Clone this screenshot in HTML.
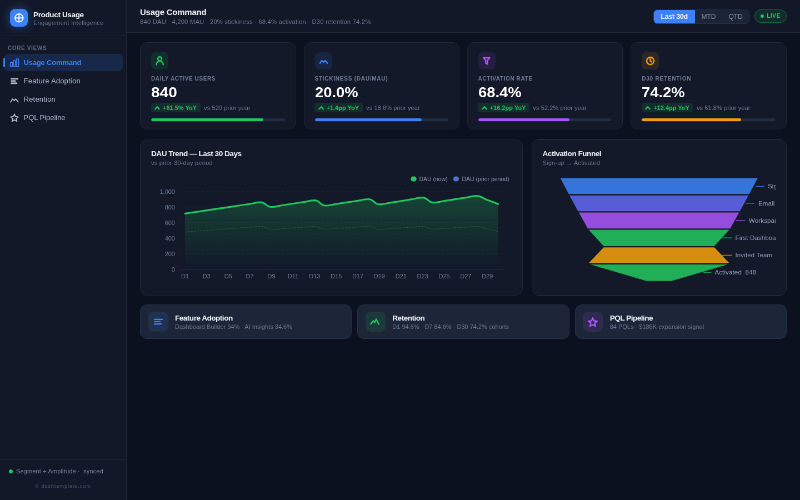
<!DOCTYPE html>
<html lang="en">
<head>
<meta charset="utf-8">
<title>Product Usage — Usage Command</title>
<style>
*{box-sizing:border-box;margin:0;padding:0}
html,body{width:800px;height:500px;overflow:hidden;background:#0c1120}
body{font-family:"Liberation Sans",sans-serif;color:#e2e8f0}
#app{position:absolute;left:0;top:0;width:1440px;height:900px;transform:scale(0.5555556);transform-origin:0 0;background:transparent;overflow:hidden;will-change:transform}
/* sidebar */
.sb{position:absolute;left:0;top:0;width:228px;height:900px;background:#121828;border-right:1px solid #1f2739}
.sbh{height:64.600px;border-bottom:1px solid #1f2739;padding:16px 18px;display:flex;align-items:center;gap:10px}
.logo{width:32px;height:32px;border-radius:9px;background:#3b82f6;box-shadow:0 0 18px rgba(59,130,246,.45);display:flex;align-items:center;justify-content:center;flex:none}
.brand b{display:block;position:relative;top:1.800px;font-size:13.5px;line-height:16px;font-weight:700;color:#f1f5f9;white-space:nowrap;letter-spacing:-.35px}
.brand span{display:block;position:relative;top:1.200px;font-size:11px;line-height:13px;color:#6c7990;white-space:nowrap;margin-top:1px;letter-spacing:.23px}
.navlab{font-size:10px;font-weight:700;letter-spacing:.63px;color:#5f6b84;padding:16px 14px 4.700px 14px;line-height:12px}
.nav{padding:0 5.700px 0 7px}
.ni{position:relative;height:31px;margin-bottom:2px;border-radius:8px;display:flex;align-items:center;padding:0 11px;gap:8.600px;font-size:13px;font-weight:400;color:#b2bdce;white-space:nowrap;letter-spacing:.2px}
.ni svg{flex:none}
.ni.on{background:#18284a;color:#3b82f6;font-weight:700;letter-spacing:-.19px}
.ni.on:before{content:"";position:absolute;left:-1px;top:7px;width:2.500px;height:17px;border-radius:2px;background:#3b82f6}
.sbf{position:absolute;left:0;right:0;bottom:0;height:73px;border-top:1px solid #1f2739;padding:14px 16px 0 16px}
.sync{display:flex;align-items:center;gap:6px;font-size:11px;letter-spacing:.15px;color:#7b879c;white-space:nowrap}
.sync i{width:7px;height:7px;border-radius:50%;background:#22c55e;display:block}
.copy{text-align:center;font-size:9.500px;letter-spacing:.75px;color:#4a556c;margin-top:14.700px}
/* topbar */
.tb{position:absolute;left:228px;top:0;right:0;height:59.200px;background:#121828;border-bottom:1px solid #1f2739}
.tb h1{position:absolute;left:24px;top:12.700px;font-size:15px;line-height:18px;font-weight:700;color:#f1f5f9;white-space:nowrap;letter-spacing:-.24px}
.tb p{position:absolute;left:24px;top:32px;font-size:11.300px;line-height:14px;color:#6c7990;white-space:nowrap;letter-spacing:.16px}
.seg{position:absolute;left:948px;top:16.500px;width:173px;height:26px;border-radius:7px;background:#1c2437;border:1px solid #283247;display:flex;overflow:hidden;font-size:12px;color:#8a96ab}
.seg span{display:flex;align-items:center;justify-content:center;height:100%}
.seg .a{width:74px;background:#3b82f6;color:#fff;font-weight:700}
.live{position:absolute;left:1130px;top:17.300px;width:58px;height:23.300px;border-radius:12px;border:1px solid rgba(34,197,94,.35);background:rgba(34,197,94,.12);color:#22c55e;font-size:10px;font-weight:700;letter-spacing:.6px;display:flex;align-items:center;justify-content:center;gap:5px}
.live i{width:6px;height:6px;border-radius:50%;background:#22c55e;display:block}
/* cards */
.card{position:absolute;background:#131929;border:1px solid #1e2638;border-radius:12px}
.kpi .ic{position:absolute;left:19px;top:17px;width:31px;height:31px;border-radius:8px;display:flex;align-items:center;justify-content:center}
.kpi .lb{position:absolute;left:19px;top:59px;font-size:10px;line-height:12px;font-weight:700;letter-spacing:.6px;color:#727e96;white-space:nowrap}
.kpi .val{position:absolute;left:19px;top:74.800px;font-size:25.500px;line-height:28px;font-weight:700;color:#fff;white-space:nowrap;transform:scaleX(1.1);transform-origin:0 0}
.kpi .row{position:absolute;left:18.500px;top:108.300px;height:17px;display:flex;align-items:center;gap:6.500px}
.kpi .bd{height:17px;border-radius:4px;background:rgba(34,197,94,.13);color:#22c55e;font-size:11px;font-weight:700;display:flex;align-items:center;padding:0 6.500px 0 5.500px;gap:4px;white-space:nowrap}
.kpi .vs{font-size:11px;line-height:16px;color:#727e96;white-space:nowrap;letter-spacing:.1px}
.kpi .bar{position:absolute;left:19px;right:19px;top:136px;height:5px;border-radius:3px;background:#232c40;overflow:hidden}
.kpi .bar i{display:block;height:100%;border-radius:3px}
.ct{position:absolute;left:19px;top:17.300px;font-size:13.600px;line-height:16px;font-weight:700;color:#f1f5f9;white-space:nowrap;letter-spacing:-.5px}
.cs{position:absolute;left:19px;top:34.700px;font-size:11px;line-height:13px;color:#6c7990;white-space:nowrap;letter-spacing:.2px}
.lnk{background:#1d2538;border-color:#283146}
.lnk .ic{position:absolute;left:13.500px;top:12px;width:36px;height:36px;border-radius:9px;display:flex;align-items:center;justify-content:center}
.lnk b{position:absolute;left:62px;top:16px;font-size:13.600px;line-height:16px;font-weight:700;color:#f1f5f9;white-space:nowrap;letter-spacing:-.52px}
.lnk span{position:absolute;left:62px;top:33px;font-size:11px;line-height:13px;color:#6f7b93;white-space:nowrap}
svg text{font-family:"Liberation Sans",sans-serif}
</style>
</head>
<body>
<div id="app">
<div class="sb">
 <div class="sbh">
  <div class="logo"><svg width="20.500" height="20.500" viewBox="0 0 24 24" fill="none" stroke="#fff" stroke-width="2.300" stroke-linecap="round"><circle cx="12" cy="12" r="8.5"/><path d="M12 3.5v17M3.5 12h17"/></svg></div>
  <div class="brand"><b>Product Usage</b><span>Engagement Intelligence</span></div>
 </div>
 <div class="navlab">CORE VIEWS</div>
 <div class="nav">
  <div class="ni on"><svg width="16" height="16" viewBox="0 0 24 24" style="overflow:visible" fill="none" stroke="currentColor" stroke-width="2.500" stroke-linejoin="round"><rect x="0.900" y="11" width="5.900" height="11.500" rx="1.200"/><rect x="9.050" y="6.300" width="5.900" height="16.200" rx="1.200"/><rect x="17.200" y="1.600" width="5.900" height="20.900" rx="1.200"/></svg><span>Usage Command</span></div>
  <div class="ni"><svg width="16" height="16" viewBox="0 0 24 24" style="overflow:visible" fill="currentColor"><rect x="2" y="3.600" width="20.300" height="4.100"/><rect x="2" y="9.650" width="13.500" height="4.100"/><rect x="2" y="15.700" width="17.600" height="4.100"/></svg><span>Feature Adoption</span></div>
  <div class="ni"><svg width="16" height="16" viewBox="0 0 24 24" style="overflow:visible" fill="none" stroke="currentColor" stroke-width="2.700" stroke-linecap="round" stroke-linejoin="round"><path d="M1.500 19l5.500-8.500 4.500 4.700 4-4.700 6.500 8.500"/></svg><span>Retention</span></div>
  <div class="ni"><svg width="16" height="16" viewBox="0 0 24 24" style="overflow:visible" fill="none" stroke="currentColor" stroke-width="2.700" stroke-linejoin="round"><path d="M12.00 2.00L14.88 8.84L22.27 9.46L16.66 14.31L18.35 21.54L12.00 17.70L5.65 21.54L7.34 14.31L1.73 9.46L9.12 8.84Z"/></svg><span style="letter-spacing:-.04px">PQL Pipeline</span></div>
 </div>
 <div class="sbf">
  <div class="sync"><i></i><span>Segment + Amplitude ·&nbsp; synced</span></div>
  <div class="copy">© dashtemplate.com</div>
 </div>
</div>
<div class="tb">
 <h1>Usage Command</h1>
 <p>840 DAU · 4,200 MAU · 20% stickiness · 68.4% activation · D30 retention 74.2%</p>
 <div class="seg"><span class="a">Last 30d</span><span style="width:50px">MTD</span><span style="width:48px">QTD</span></div>
 <div class="live"><i></i><span>LIVE</span></div>
</div>
<div class="card kpi" style="left:252px;top:76px;width:280.500px;height:157px">
 <div class="ic" style="background:rgba(34,197,94,.12)"><svg width="31" height="31" viewBox="0 0 31 31" fill="none" stroke="#22c55e" stroke-width="2.400" stroke-linecap="round" stroke-linejoin="round"><circle cx="15.500" cy="11.700" r="3.500"/><path d="M9.300 22.300a6.200 6.200 0 0 1 12.400 0"/></svg></div>
 <div class="lb">DAILY ACTIVE USERS</div>
 <div class="val">840</div>
 <div class="row"><div class="bd"><svg width="12" height="12" viewBox="0 0 24 24" fill="none" stroke="currentColor" stroke-width="4.600" stroke-linecap="round" stroke-linejoin="round"><path d="M4.5 16.5l7.5-8 7.5 8"/></svg><span>+61.5% YoY</span></div><div class="vs">vs 520 prior year</div></div>
 <div class="bar"><i style="width:84%;background:#22c55e"></i></div>
</div>
<div class="card kpi" style="left:546.5px;top:76px;width:280.500px;height:157px">
 <div class="ic" style="background:rgba(59,130,246,.12)"><svg width="31" height="31" viewBox="0 0 31 31" fill="none" stroke="#3b82f6" stroke-width="2.400" stroke-linecap="round" stroke-linejoin="round"><path d="M8.800 19.900L12.300 14.900L15.350 18.500L18.500 14.900L22.400 19.900"/></svg></div>
 <div class="lb" style="letter-spacing:.76px">STICKINESS (DAU/MAU)</div>
 <div class="val" style="transform:scaleX(1.075)">20.0%</div>
 <div class="row"><div class="bd"><svg width="12" height="12" viewBox="0 0 24 24" fill="none" stroke="currentColor" stroke-width="4.600" stroke-linecap="round" stroke-linejoin="round"><path d="M4.5 16.5l7.5-8 7.5 8"/></svg><span>+1.4pp YoY</span></div><div class="vs">vs 18.6% prior year</div></div>
 <div class="bar"><i style="width:80%;background:#3b82f6"></i></div>
</div>
<div class="card kpi" style="left:840.600px;top:76px;width:280.500px;height:157px">
 <div class="ic" style="background:rgba(168,85,247,.12)"><svg width="31" height="31" viewBox="0 0 31 31" fill="none" stroke="#a855f7" stroke-width="2.500" stroke-linecap="round" stroke-linejoin="round"><path d="M9.200 9.900H20.300L16.300 14.800V21.300L13.300 19.800V14.800Z"/></svg></div>
 <div class="lb">ACTIVATION RATE</div>
 <div class="val" style="transform:scaleX(1.075)">68.4%</div>
 <div class="row"><div class="bd"><svg width="12" height="12" viewBox="0 0 24 24" fill="none" stroke="currentColor" stroke-width="4.600" stroke-linecap="round" stroke-linejoin="round"><path d="M4.5 16.5l7.5-8 7.5 8"/></svg><span>+16.2pp YoY</span></div><div class="vs">vs 52.2% prior year</div></div>
 <div class="bar"><i style="width:68.4%;background:#a855f7"></i></div>
</div>
<div class="card kpi" style="left:1135.200px;top:76px;width:280.500px;height:157px">
 <div class="ic" style="background:rgba(245,158,11,.12)"><svg width="31" height="31" viewBox="0 0 31 31" fill="none" stroke="#f59e0b" stroke-width="2.400" stroke-linecap="round" stroke-linejoin="round"><circle cx="15.500" cy="15.500" r="6.500"/><path d="M15.500 11.600V15.700L18.200 17.400"/></svg></div>
 <div class="lb" style="letter-spacing:.78px">D30 RETENTION</div>
 <div class="val" style="transform:scaleX(1.075)">74.2%</div>
 <div class="row"><div class="bd"><svg width="12" height="12" viewBox="0 0 24 24" fill="none" stroke="currentColor" stroke-width="4.600" stroke-linecap="round" stroke-linejoin="round"><path d="M4.5 16.5l7.5-8 7.5 8"/></svg><span>+12.4pp YoY</span></div><div class="vs">vs 61.8% prior year</div></div>
 <div class="bar"><i style="width:74.2%;background:#f59e0b"></i></div>
</div>

<!--C0--><div class="card" style="left:252px;top:251px;width:688.600px;height:281px">
 <div class="ct">DAU Trend — Last 30 Days</div><div class="cs">vs prior 30-day period</div>
 <svg style="position:absolute;left:-1px;top:-1px" width="688" height="281" viewBox="252 251 688 281">
  <defs><linearGradient id="ga" x1="0" y1="0" x2="0" y2="1"><stop offset="0" stop-color="#22c55e" stop-opacity=".25"/><stop offset="1" stop-color="#22c55e" stop-opacity="0"/></linearGradient>
  <linearGradient id="gb" x1="0" y1="0" x2="0" y2="1"><stop offset="0" stop-color="#64748b" stop-opacity="0"/><stop offset="1" stop-color="#64748b" stop-opacity="0"/></linearGradient></defs>
  <g stroke="#20293c" stroke-width="1" stroke-dasharray="4 4" fill="none"><path d="M323.3 456.9H906.5"/><path d="M323.3 428.9H906.5"/><path d="M323.3 400.9H906.5"/><path d="M323.3 372.9H906.5"/><path d="M323.3 344.9H906.5"/></g>
  <path d="M323.3 484.9H906.5" stroke="#283247" stroke-width="1" fill="none"/>
  <path d="M333.0 417.6C342.7 416.8 342.7 416.8 352.4 416.1C362.2 415.4 362.2 415.4 371.9 414.7C381.6 414.0 381.6 414.0 391.3 413.2C401.0 412.5 401.0 412.5 410.8 411.8C420.5 411.1 420.5 411.1 430.2 410.4C439.9 409.6 439.9 409.6 449.6 408.9C459.4 408.2 459.4 407.5 469.1 407.5C478.8 407.5 478.8 412.9 488.5 412.9C498.2 412.9 498.2 412.3 508.0 411.6C517.7 410.9 517.7 410.9 527.4 410.2C537.1 409.5 537.1 409.5 546.8 408.8C556.6 408.2 556.6 407.5 566.3 407.5C576.0 407.5 576.0 412.5 585.7 412.5C595.4 412.5 595.4 411.9 605.2 411.3C614.9 410.6 614.9 410.6 624.6 410.0C634.3 409.4 634.3 409.4 644.0 408.7C653.8 408.1 653.8 407.5 663.5 407.5C673.2 407.5 673.2 412.9 682.9 412.9C692.6 412.9 692.6 412.3 702.4 411.6C712.1 410.9 712.1 410.9 721.8 410.2C731.5 409.5 731.5 409.5 741.2 408.8C751.0 408.2 751.0 407.5 760.7 407.5C770.4 407.5 770.4 412.5 780.1 412.5C789.8 412.5 789.8 411.9 799.6 411.3C809.3 410.6 809.3 410.6 819.0 410.0C828.7 409.4 828.7 409.4 838.4 408.7C848.2 408.1 848.2 407.5 857.9 407.5C867.6 407.5 867.6 409.8 877.3 412.1C887.0 414.4 887.0 414.5 896.8 416.9L896.8 484.9L333.0 484.9Z" fill="url(#gb)"/>
  <path d="M333.0 384.4C342.7 382.9 342.7 382.9 352.4 381.5C362.2 380.1 362.2 380.1 371.9 378.6C381.6 377.2 381.6 377.2 391.3 375.7C401.0 374.3 401.0 374.3 410.8 372.9C420.5 371.4 420.5 371.4 430.2 370.0C439.9 368.5 439.9 368.5 449.6 367.1C459.4 365.7 459.4 364.2 469.1 364.2C478.8 364.2 478.8 372.5 488.5 372.5C498.2 372.5 498.2 371.0 508.0 369.5C517.7 368.0 517.7 368.0 527.4 366.5C537.1 365.0 537.1 365.0 546.8 363.6C556.6 362.1 556.6 360.6 566.3 360.6C576.0 360.6 576.0 370.0 585.7 370.0C595.4 370.0 595.4 368.5 605.2 367.1C614.9 365.7 614.9 365.7 624.6 364.2C634.3 362.8 634.3 362.8 644.0 361.3C653.8 359.9 653.8 358.5 663.5 358.5C673.2 358.5 673.2 367.9 682.9 367.9C692.6 367.9 692.6 366.3 702.4 364.8C712.1 363.3 712.1 363.3 721.8 361.8C731.5 360.2 731.5 360.2 741.2 358.7C751.0 357.2 751.0 355.7 760.7 355.7C770.4 355.7 770.4 364.6 780.1 364.6C789.8 364.6 789.8 363.2 799.6 361.7C809.3 360.2 809.3 360.2 819.0 358.7C828.7 357.2 828.7 357.2 838.4 355.7C848.2 354.2 848.2 352.7 857.9 352.7C867.6 352.7 867.6 356.4 877.3 360.0C887.0 363.6 887.0 363.6 896.8 367.2L896.8 484.9L333.0 484.9Z" fill="url(#ga)" id="areaNow"/>
  <path d="M333.0 417.6C342.7 416.8 342.7 416.8 352.4 416.1C362.2 415.4 362.2 415.4 371.9 414.7C381.6 414.0 381.6 414.0 391.3 413.2C401.0 412.5 401.0 412.5 410.8 411.8C420.5 411.1 420.5 411.1 430.2 410.4C439.9 409.6 439.9 409.6 449.6 408.9C459.4 408.2 459.4 407.5 469.1 407.5C478.8 407.5 478.8 412.9 488.5 412.9C498.2 412.9 498.2 412.3 508.0 411.6C517.7 410.9 517.7 410.9 527.4 410.2C537.1 409.5 537.1 409.5 546.8 408.8C556.6 408.2 556.6 407.5 566.3 407.5C576.0 407.5 576.0 412.5 585.7 412.5C595.4 412.5 595.4 411.9 605.2 411.3C614.9 410.6 614.9 410.6 624.6 410.0C634.3 409.4 634.3 409.4 644.0 408.7C653.8 408.1 653.8 407.5 663.5 407.5C673.2 407.5 673.2 412.9 682.9 412.9C692.6 412.9 692.6 412.3 702.4 411.6C712.1 410.9 712.1 410.9 721.8 410.2C731.5 409.5 731.5 409.5 741.2 408.8C751.0 408.2 751.0 407.5 760.7 407.5C770.4 407.5 770.4 412.5 780.1 412.5C789.8 412.5 789.8 411.9 799.6 411.3C809.3 410.6 809.3 410.6 819.0 410.0C828.7 409.4 828.7 409.4 838.4 408.7C848.2 408.1 848.2 407.5 857.9 407.5C867.6 407.5 867.6 409.8 877.3 412.1C887.0 414.4 887.0 414.5 896.8 416.9" fill="none" stroke="#8492aa" stroke-opacity=".27" stroke-width="1.300" stroke-dasharray="3.500 2"/>
  <path d="M333.0 384.4C342.7 382.9 342.7 382.9 352.4 381.5C362.2 380.1 362.2 380.1 371.9 378.6C381.6 377.2 381.6 377.2 391.3 375.7C401.0 374.3 401.0 374.3 410.8 372.9C420.5 371.4 420.5 371.4 430.2 370.0C439.9 368.5 439.9 368.5 449.6 367.1C459.4 365.7 459.4 364.2 469.1 364.2C478.8 364.2 478.8 372.5 488.5 372.5C498.2 372.5 498.2 371.0 508.0 369.5C517.7 368.0 517.7 368.0 527.4 366.5C537.1 365.0 537.1 365.0 546.8 363.6C556.6 362.1 556.6 360.6 566.3 360.6C576.0 360.6 576.0 370.0 585.7 370.0C595.4 370.0 595.4 368.5 605.2 367.1C614.9 365.7 614.9 365.7 624.6 364.2C634.3 362.8 634.3 362.8 644.0 361.3C653.8 359.9 653.8 358.5 663.5 358.5C673.2 358.5 673.2 367.9 682.9 367.9C692.6 367.9 692.6 366.3 702.4 364.8C712.1 363.3 712.1 363.3 721.8 361.8C731.5 360.2 731.5 360.2 741.2 358.7C751.0 357.2 751.0 355.7 760.7 355.7C770.4 355.7 770.4 364.6 780.1 364.6C789.8 364.6 789.8 363.2 799.6 361.7C809.3 360.2 809.3 360.2 819.0 358.7C828.7 357.2 828.7 357.2 838.4 355.7C848.2 354.2 848.2 352.7 857.9 352.7C867.6 352.7 867.6 356.4 877.3 360.0C887.0 363.6 887.0 363.6 896.8 367.2" fill="none" stroke="#22c55e" stroke-width="3.2" stroke-linecap="round" stroke-linejoin="round"/>
  <g font-size="11" fill="#717e97"><text x="315" y="488.9" text-anchor="end">0</text><text x="315" y="460.9" text-anchor="end">200</text><text x="315" y="432.9" text-anchor="end">400</text><text x="315" y="404.9" text-anchor="end">600</text><text x="315" y="376.9" text-anchor="end">800</text><text x="315" y="348.9" text-anchor="end">1,000</text><text x="333.0" y="501" text-anchor="middle">D1</text><text x="371.9" y="501" text-anchor="middle">D3</text><text x="410.8" y="501" text-anchor="middle">D5</text><text x="449.6" y="501" text-anchor="middle">D7</text><text x="488.5" y="501" text-anchor="middle">D9</text><text x="527.4" y="501" text-anchor="middle">D11</text><text x="566.3" y="501" text-anchor="middle">D13</text><text x="605.2" y="501" text-anchor="middle">D15</text><text x="644.0" y="501" text-anchor="middle">D17</text><text x="682.9" y="501" text-anchor="middle">D19</text><text x="721.8" y="501" text-anchor="middle">D21</text><text x="760.7" y="501" text-anchor="middle">D23</text><text x="799.6" y="501" text-anchor="middle">D25</text><text x="838.4" y="501" text-anchor="middle">D27</text><text x="877.3" y="501" text-anchor="middle">D29</text></g>
  <rect x="739.300" y="317.500" width="10.500" height="9" rx="4.500" fill="#22c55e"/><text x="754.500" y="326" font-size="10.500" fill="#8d99ae">DAU (now)</text>
  <rect x="815.700" y="317.500" width="10.500" height="9" rx="4.500" fill="#5470c6"/><text x="831.500" y="326" font-size="10.500" fill="#8d99ae">DAU (prior period)</text>
 </svg>
</div>
<div class="card" style="left:956.500px;top:251px;width:459.500px;height:281px">
 <div class="ct">Activation Funnel</div><div class="cs">Sign-up → Activated</div>
 <svg style="position:absolute;left:19px;top:52px;overflow:hidden" width="420.500" height="215" viewBox="976.500 304 420.500 215" xml:space="preserve">
  <g font-size="11.500" fill="#94a0b6" letter-spacing=".15"><path d="M1008.0 320.4H1363.3L1348.1 349.3H1023.2Z" fill="#3b82f6" fill-opacity=".87"/><path d="M1359.9 335.4H1375.2" stroke="#3b82f6" stroke-opacity=".8" stroke-width="1.500" fill="none"/><text x="1381.5" y="339.4" style="white-space:pre">Sign-up  2,480</text><path d="M1024.5 351.7H1346.8L1331.2 380.2H1040.1Z" fill="#6366f1" fill-opacity=".87"/><path d="M1341.9 365.9H1357.2" stroke="#6366f1" stroke-opacity=".8" stroke-width="1.500" fill="none"/><text x="1364.4" y="369.9" style="white-space:pre">Email Verified  2,260</text><path d="M1041.4 382.6H1329.9L1313.9 411.2H1057.4Z" fill="#a855f7" fill-opacity=".87"/><path d="M1323.9 396.9H1341.0" stroke="#a855f7" stroke-opacity=".8" stroke-width="1.500" fill="none"/><text x="1347.5" y="400.9" style="white-space:pre">Workspace Created  2,020</text><path d="M1059.1 413.6H1312.2L1285.2 442.9H1086.1Z" fill="#22c55e" fill-opacity=".87"/><path d="M1298.9 428.2H1317.6" stroke="#22c55e" stroke-opacity=".8" stroke-width="1.500" fill="none"/><text x="1323.0" y="432.2" style="white-space:pre">First Dashboard  1,780</text><path d="M1086.1 445.3H1285.3L1312.1 473.5H1059.2Z" fill="#f59e0b" fill-opacity=".87"/><path d="M1298.9 459.4H1317.6" stroke="#f59e0b" stroke-opacity=".8" stroke-width="1.500" fill="none"/><text x="1323.0" y="463.4" style="white-space:pre">Invited Team  1,370</text><path d="M1062.1 475.9H1309.2L1208.2 505.8H1163.2Z" fill="#22c55e" fill-opacity=".87"/><path d="M1265.4 490.2H1279.8" stroke="#22c55e" stroke-opacity=".8" stroke-width="1.500" fill="none"/><text x="1285.9" y="494.2" style="white-space:pre">Activated  848</text></g>
 </svg>
</div>
<!--C1-->
<div class="card lnk" style="left:252px;top:548px;width:381.300px;height:62px"><div class="ic" style="background:rgba(59,130,246,.13)"><svg width="36" height="36" viewBox="0 0 36 36" fill="none" stroke="#3b82f6" stroke-width="2.300" stroke-linecap="round"><path d="M11.200 13.800H25.600M11.200 17.900H20.900M11.200 22H23.300"/></svg></div><b>Feature Adoption</b><span>Dashboard Builder 94% · AI Insights 34.6%</span></div>
<div class="card lnk" style="left:643.300px;top:548px;width:381.300px;height:62px"><div class="ic" style="background:rgba(34,197,94,.13)"><svg width="36" height="36" viewBox="0 0 36 36" fill="none" stroke="#22c55e" stroke-width="2.500" stroke-linecap="round" stroke-linejoin="round"><path d="M9.300 22.500L13.800 16.400L16.500 19.800L19.200 13.500L23.700 22.500"/></svg></div><b>Retention</b><span>D1 94.6% · D7 84.6% · D30 74.2% cohorts</span></div>
<div class="card lnk" style="left:1034.700px;top:548px;width:381.300px;height:62px"><div class="ic" style="background:rgba(168,85,247,.13)"><svg width="36" height="36" viewBox="0 0 36 36" fill="none" stroke="#a855f7" stroke-width="2.500" stroke-linejoin="round"><path d="M17.90 11.40L20.07 16.61L25.70 17.07L21.42 20.74L22.72 26.23L17.90 23.30L13.08 26.23L14.38 20.74L10.10 17.07L15.73 16.61Z"/></svg></div><b>PQL Pipeline</b><span>84 PQLs · $186K expansion signal</span></div>

</div>
</body>
</html>
